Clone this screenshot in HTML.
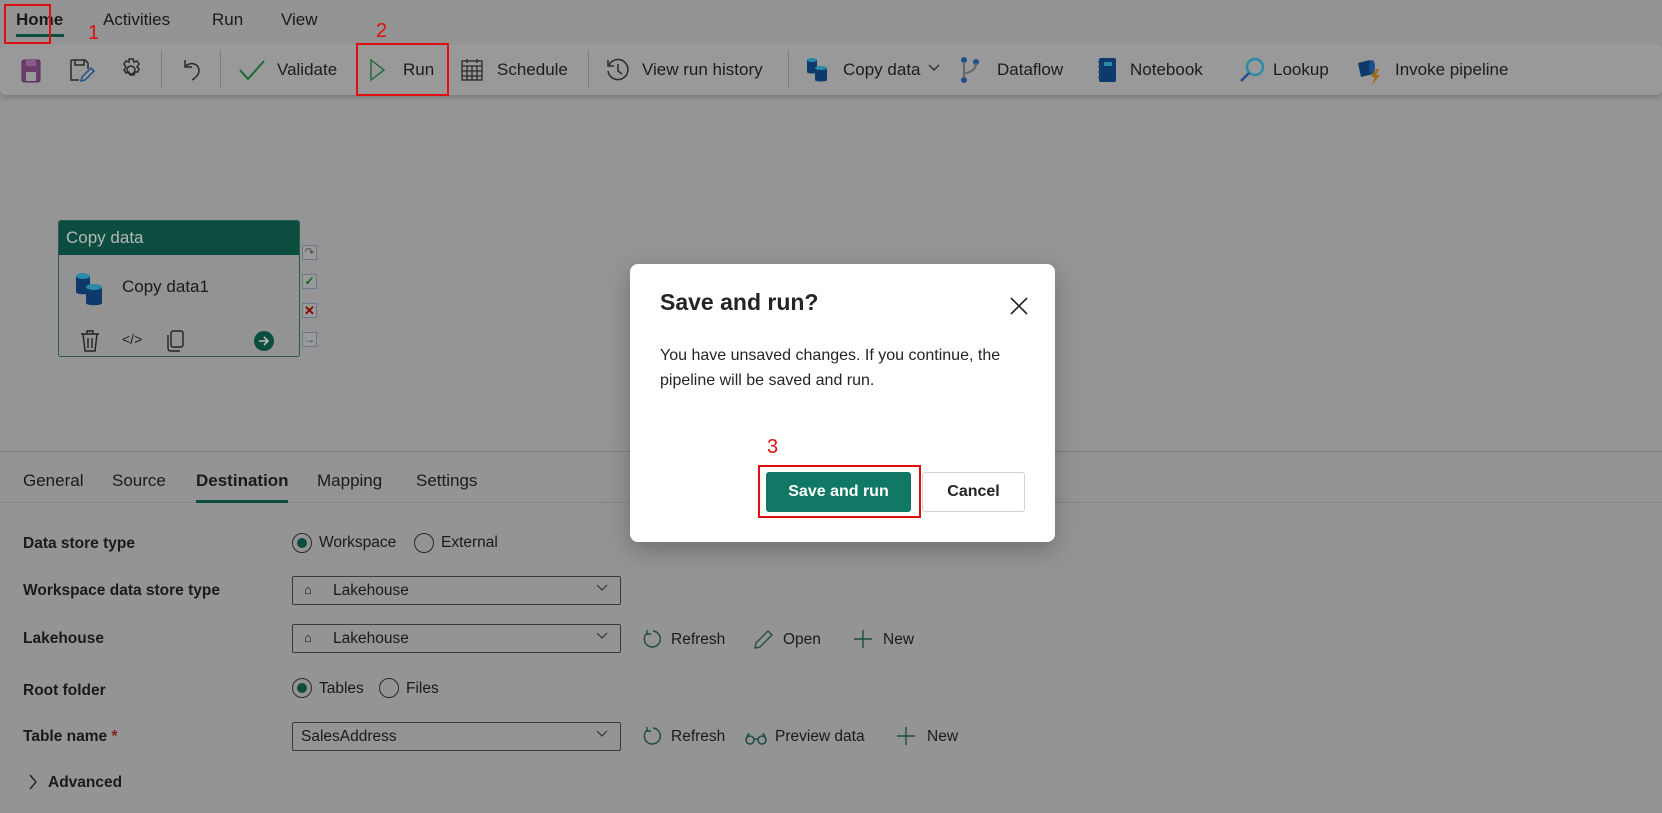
<!DOCTYPE html>
<html><head><meta charset="utf-8"><style>
*{margin:0;padding:0;box-sizing:border-box}
body{width:1662px;height:813px;overflow:hidden;background:#949494;font-family:"Liberation Sans",sans-serif;color:#1a1a1a;position:relative}
.a{position:absolute;white-space:nowrap}
.t{font-size:17px;color:#1c1c1c}
.sep{position:absolute;top:50px;width:1px;height:38px;background:#7e7e7e}
.lbl{font-size:15.5px;font-weight:bold;color:#1a1a1a}
.inp{position:absolute;left:292px;width:329px;height:29px;border:1px solid #3a3a3a;border-radius:2px}
.inp span{position:absolute;top:5px;font-size:15.5px}
.chev{position:absolute;right:12px;top:7px}
.radio{position:absolute;width:20px;height:20px;border-radius:50%;border:1px solid #2a2a2a}
.radio.on::after{content:"";position:absolute;left:4px;top:4px;width:10px;height:10px;border-radius:50%;background:#0b4d3f}
</style></head><body>
<!-- top tabs -->
<div class="a" style="left:16px;top:10px;font-size:17px;font-weight:bold">Home</div>
<div class="a" style="left:16px;top:34px;width:48px;height:3px;background:#0b4d3f"></div>
<div class="a" style="left:103px;top:10px;font-size:17px">Activities</div>
<div class="a" style="left:212px;top:10px;font-size:17px">Run</div>
<div class="a" style="left:281px;top:10px;font-size:17px">View</div>
<div class="a" style="left:4px;top:4px;width:47px;height:40px;border:2px solid #e01010"></div>
<div class="a" style="left:88px;top:22px;font-size:20px;color:#e01010">1</div>
<!-- toolbar -->
<div class="a" style="left:0;top:44px;width:1662px;height:51px;background:#999;border-radius:6px;box-shadow:0 3px 4px rgba(0,0,0,.15)"></div>
<svg class="a" style="left:20px;top:58px" width="24" height="26" viewBox="0 0 24 26"><rect x="2" y="2" width="18" height="22" rx="2" fill="#6a3d6a" stroke="#5a2d5a"/><rect x="6" y="14" width="10" height="9" fill="#999"/><rect x="6" y="2" width="10" height="6" fill="#8a5a8a"/></svg>
<svg class="a" style="left:68px;top:57px" width="28" height="28" viewBox="0 0 28 28" fill="none" stroke="#2a2a2a" stroke-width="1.5"><path d="M3 3h14l3 3v6M3 3v20h8"/><path d="M7 3v5h9V3"/><path d="M13 24l1-4 9-9 3 3-9 9z" stroke="#1f4e8c"/></svg>
<svg class="a" style="left:118px;top:57px" width="26" height="26" viewBox="0 0 26 26" fill="none" stroke="#2a2a2a" stroke-width="1.5"><circle cx="13" cy="13" r="4"/><path d="M11 2h4l1 3 3-1 2 3-2 3 2 2-1 3-3 0-1 3h-4l-1-3-3 1-2-3 2-3-2-3 2-3 3 1z"/></svg>
<div class="sep" style="left:161px"></div>
<svg class="a" style="left:180px;top:57px" width="24" height="26" viewBox="0 0 24 26" fill="none" stroke="#2a2a2a" stroke-width="1.5"><path d="M5 3v7h7"/><path d="M5 10c3-4 10-5 13 0 3 5-1 10-6 13"/></svg>
<div class="sep" style="left:220px"></div>
<svg class="a" style="left:238px;top:58px" width="28" height="24" viewBox="0 0 28 24" fill="none" stroke="#1a6a3a" stroke-width="2"><path d="M2 12l8 9L26 3"/></svg>
<div class="a t" style="left:277px;top:60px">Validate</div>
<svg class="a" style="left:368px;top:58px" width="18" height="24" viewBox="0 0 18 24" fill="none" stroke="#1a6a3a" stroke-width="1.4"><path d="M3 2l13 10L3 22z"/></svg>
<div class="a t" style="left:403px;top:60px">Run</div>
<div class="a" style="left:356px;top:43px;width:93px;height:53px;border:2px solid #e01010"></div>
<div class="a" style="left:376px;top:20px;font-size:20px;color:#e01010">2</div>
<svg class="a" style="left:460px;top:58px" width="24" height="24" viewBox="0 0 24 24" fill="none" stroke="#2a2a2a" stroke-width="1.3"><rect x="2" y="3" width="20" height="19"/><path d="M2 8h20M2 13h20M2 18h20M7 8v14M12 8v14M17 8v14M7 1v4M17 1v4"/></svg>
<div class="a t" style="left:497px;top:60px">Schedule</div>
<div class="sep" style="left:588px"></div>
<svg class="a" style="left:605px;top:57px" width="26" height="26" viewBox="0 0 26 26" fill="none" stroke="#2a2a2a" stroke-width="1.5"><path d="M4 8A10 10 0 1 1 3 14"/><path d="M3 3v6h6"/><path d="M13 7v7l4 3"/></svg>
<div class="a t" style="left:642px;top:60px">View run history</div>
<div class="sep" style="left:788px"></div>
<svg class="a" style="left:806px;top:56px" width="24" height="28" viewBox="0 0 24 28"><path d="M1 4v12c0 2 10 2 10 0V4" fill="#0d3a6a"/><ellipse cx="6" cy="4" rx="5" ry="2" fill="#2a8aa8"/><path d="M9 12v12c0 2 12 2 12 0V12" fill="#0d3a6a"/><ellipse cx="15" cy="12" rx="6" ry="2" fill="#2a8aa8"/></svg>
<div class="a t" style="left:843px;top:60px">Copy data</div>
<svg class="a" style="left:928px;top:64px" width="12" height="8" viewBox="0 0 12 8" fill="none" stroke="#2a2a2a" stroke-width="1.3"><path d="M1 1l5 5 5-5"/></svg>
<svg class="a" style="left:960px;top:56px" width="20" height="28" viewBox="0 0 20 28" fill="#1f4e8c"><circle cx="4" cy="4" r="3"/><circle cx="4" cy="24" r="3"/><circle cx="16" cy="6" r="3"/><path d="M3 6h2v16H3zM4 16c6 0 11-3 11-9h2c0 7-6 11-13 11z" fill="#666"/></svg>
<div class="a t" style="left:997px;top:60px">Dataflow</div>
<svg class="a" style="left:1096px;top:56px" width="22" height="28" viewBox="0 0 22 28"><rect x="3" y="2" width="17" height="24" rx="2" fill="#0d3a6a"/><rect x="8" y="6" width="8" height="4" fill="#2a8aa8"/><path d="M2 6h3M2 11h3M2 16h3M2 21h3" stroke="#1a4a7a" stroke-width="1.5"/></svg>
<div class="a t" style="left:1130px;top:60px">Notebook</div>
<svg class="a" style="left:1238px;top:56px" width="28" height="28" viewBox="0 0 28 28" fill="none" stroke-width="2.5"><circle cx="17" cy="11" r="8" stroke="#2a8aa8"/><path d="M11 17L3 25" stroke="#1f4e8c"/></svg>
<div class="a t" style="left:1273px;top:60px">Lookup</div>
<svg class="a" style="left:1356px;top:57px" width="30" height="28" viewBox="0 0 30 28"><path d="M2 6l12-3 3 14-12 3z" fill="#0d3a6a"/><ellipse cx="16" cy="10" rx="3" ry="7" fill="#1f4e8c"/><path d="M20 12l-5 8h4l-3 8 8-10h-4l3-6z" fill="#a06a10"/></svg>
<div class="a t" style="left:1395px;top:60px">Invoke pipeline</div>
<!-- canvas -->
<div class="a" style="left:0;top:102px;width:1662px;height:344px;background:#959595"></div>
<!-- node -->
<div class="a" style="left:58px;top:220px;width:242px;height:137px;border:1px solid #2a5a4a;border-radius:3px;background:#939393;overflow:hidden">
 <div style="height:34px;background:#0b4d3f;color:#b8b8b8;font-size:17px;padding:7px 7px">Copy data</div>
</div>
<svg class="a" style="left:75px;top:271px" width="34" height="36" viewBox="0 0 34 36"><path d="M1 5v16c0 3 14 3 14 0V5" fill="#0d3a6a"/><ellipse cx="8" cy="5" rx="7" ry="3" fill="#2a8aa8"/><path d="M11 16v16c0 3 16 3 16 0V16" fill="#0d3a6a"/><ellipse cx="19" cy="16" rx="8" ry="3" fill="#2a8aa8"/></svg>
<div class="a" style="left:122px;top:277px;font-size:17px">Copy data1</div>
<svg class="a" style="left:80px;top:330px" width="20" height="22" viewBox="0 0 20 22" fill="none" stroke="#222" stroke-width="1.4"><path d="M1 4h18M7 4V1h6v3M3 4l2 17h10l2-17M8 8v10M12 8v10"/></svg>
<div class="a" style="left:122px;top:331px;font-size:14px;color:#222">&lt;/&gt;</div>
<svg class="a" style="left:165px;top:330px" width="20" height="22" viewBox="0 0 20 22" fill="none" stroke="#222" stroke-width="1.4"><rect x="6" y="1" width="12" height="16" rx="2"/><path d="M3 5v13c0 2 1 3 3 3h9"/></svg>
<svg class="a" style="left:254px;top:331px" width="20" height="20" viewBox="0 0 20 20"><circle cx="10" cy="10" r="10" fill="#0b4d3f"/><path d="M5 10h9M10 6l4 4-4 4" stroke="#bbb" stroke-width="1.6" fill="none"/></svg>
<div class="a" style="left:302px;top:245px;width:15px;height:15px;border:1px solid #6a7a8a;background:#9a9a9a;font-size:12px;color:#555;text-align:center;line-height:13px">↷</div>
<div class="a" style="left:302px;top:274px;width:15px;height:15px;border:1px solid #6a7a8a;background:#9a9a9a;font-size:12px;color:#0a6a1a;text-align:center;line-height:13px;font-weight:bold">✓</div>
<div class="a" style="left:302px;top:303px;width:15px;height:15px;border:1px solid #6a7a8a;background:#9a9a9a;font-size:13px;color:#800;text-align:center;line-height:13px;font-weight:bold">✕</div>
<div class="a" style="left:302px;top:332px;width:15px;height:15px;border:1px solid #6a7a8a;background:#9a9a9a;font-size:12px;color:#1f4e8c;text-align:center;line-height:13px;font-weight:bold">→</div>
<!-- bottom panel -->
<div class="a" style="left:0;top:451px;width:1662px;height:1px;background:#808080"></div>
<div class="a" style="left:0;top:502px;width:1662px;height:1px;background:#858585"></div>
<div class="a" style="left:23px;top:471px;font-size:17px">General</div>
<div class="a" style="left:112px;top:471px;font-size:17px">Source</div>
<div class="a" style="left:196px;top:471px;font-size:17px;font-weight:bold">Destination</div>
<div class="a" style="left:196px;top:500px;width:92px;height:3px;background:#0b4d3f"></div>
<div class="a" style="left:317px;top:471px;font-size:17px">Mapping</div>
<div class="a" style="left:416px;top:471px;font-size:17px">Settings</div>

<div class="a lbl" style="left:23px;top:535px">Data store type</div>
<div class="radio on" style="left:292px;top:533px"></div><div class="a" style="left:319px;top:534px;font-size:15.5px">Workspace</div>
<div class="radio" style="left:414px;top:533px"></div><div class="a" style="left:441px;top:534px;font-size:15.5px">External</div>

<div class="a lbl" style="left:23px;top:582px">Workspace data store type</div>
<div class="inp" style="top:576px"><span style="left:11px;font-size:13px">⌂</span><span style="left:40px">Lakehouse</span><svg class="chev" width="12" height="8" viewBox="0 0 12 8" fill="none" stroke="#2a2a2a"><path d="M1 1l5 5 5-5"/></svg></div>

<div class="a lbl" style="left:23px;top:630px">Lakehouse</div>
<div class="inp" style="top:624px"><span style="left:11px;font-size:13px">⌂</span><span style="left:40px">Lakehouse</span><svg class="chev" width="12" height="8" viewBox="0 0 12 8" fill="none" stroke="#2a2a2a"><path d="M1 1l5 5 5-5"/></svg></div>
<svg class="a" style="left:643px;top:629px" width="20" height="20" viewBox="0 0 20 20" fill="none" stroke="#1f4a44" stroke-width="1.4"><path d="M4 4A8 8 0 1 0 10 2M4 1v4h4"/></svg>
<div class="a" style="left:671px;top:631px;font-size:15.5px">Refresh</div>
<svg class="a" style="left:753px;top:628px" width="22" height="22" viewBox="0 0 22 22" fill="none" stroke="#1f4a44" stroke-width="1.3"><path d="M2 20l1-5L15 3l4 4L7 19z"/></svg>
<div class="a" style="left:783px;top:631px;font-size:15.5px">Open</div>
<svg class="a" style="left:853px;top:629px" width="20" height="20" viewBox="0 0 20 20" stroke="#1f4a44" stroke-width="1.4"><path d="M10 1v18M1 10h18"/></svg>
<div class="a" style="left:883px;top:631px;font-size:15.5px">New</div>

<div class="a lbl" style="left:23px;top:682px">Root folder</div>
<div class="radio on" style="left:292px;top:678px"></div><div class="a" style="left:319px;top:680px;font-size:15.5px">Tables</div>
<div class="radio" style="left:379px;top:678px"></div><div class="a" style="left:406px;top:680px;font-size:15.5px">Files</div>

<div class="a lbl" style="left:23px;top:728px">Table name <span style="color:#8a1a1a">*</span></div>
<div class="inp" style="top:722px"><span style="left:8px">SalesAddress</span><svg class="chev" width="12" height="8" viewBox="0 0 12 8" fill="none" stroke="#2a2a2a"><path d="M1 1l5 5 5-5"/></svg></div>
<svg class="a" style="left:643px;top:726px" width="20" height="20" viewBox="0 0 20 20" fill="none" stroke="#1f4a44" stroke-width="1.4"><path d="M4 4A8 8 0 1 0 10 2M4 1v4h4"/></svg>
<div class="a" style="left:671px;top:728px;font-size:15.5px">Refresh</div>
<svg class="a" style="left:745px;top:731px" width="22" height="14" viewBox="0 0 22 14" fill="none" stroke="#1f4a44" stroke-width="1.5"><circle cx="5" cy="9" r="4"/><circle cx="17" cy="9" r="4"/><path d="M9 8h4M1 8l3-6M21 8l-3-6"/></svg>
<div class="a" style="left:775px;top:728px;font-size:15.5px">Preview data</div>
<svg class="a" style="left:896px;top:726px" width="20" height="20" viewBox="0 0 20 20" stroke="#1f4a44" stroke-width="1.4"><path d="M10 1v18M1 10h18"/></svg>
<div class="a" style="left:927px;top:728px;font-size:15.5px">New</div>

<svg class="a" style="left:28px;top:774px" width="10" height="16" viewBox="0 0 10 16" fill="none" stroke="#222" stroke-width="1.4"><path d="M2 1l6 7-6 7"/></svg>
<div class="a lbl" style="left:48px;top:774px">Advanced</div>

<!-- dialog -->
<div class="a" style="left:630px;top:264px;width:425px;height:278px;background:#fff;border-radius:8px;box-shadow:0 8px 24px rgba(0,0,0,.25)"></div>
<div class="a" style="left:660px;top:289px;font-size:23px;font-weight:bold;color:#242424">Save and run?</div>
<svg class="a" style="left:1010px;top:297px" width="18" height="18" viewBox="0 0 18 18" stroke="#242424" stroke-width="1.6"><path d="M1 1l16 16M17 1L1 17"/></svg>
<div class="a" style="left:660px;top:343px;font-size:16px;line-height:25px;color:#242424;white-space:normal;width:370px">You have unsaved changes. If you continue, the pipeline will be saved and run.</div>
<div class="a" style="left:767px;top:436px;font-size:20px;color:#e01010">3</div>
<div class="a" style="left:758px;top:465px;width:163px;height:53px;border:2px solid #e01010"></div>
<div class="a" style="left:766px;top:472px;width:145px;height:40px;background:#117865;border-radius:3px;color:#fff;font-size:16px;font-weight:bold;text-align:center;line-height:40px">Save and run</div>
<div class="a" style="left:922px;top:472px;width:103px;height:40px;border:1px solid #d1d1d1;border-radius:3px;color:#242424;font-size:16px;font-weight:bold;text-align:center;line-height:38px">Cancel</div>
</body></html>
